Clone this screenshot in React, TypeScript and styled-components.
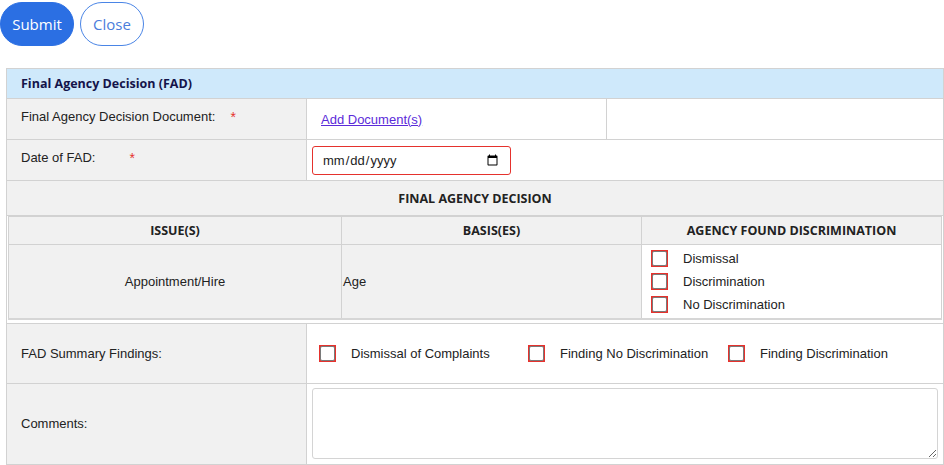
import React from "react";
import styled, { createGlobalStyle } from "styled-components";

const Global = createGlobalStyle`
  body {
    margin: 0;
    background: #fff;
    font-family: "Liberation Sans", Arial, sans-serif;
    font-size: 13px;
    color: #222;
  }
`;

const Page = styled.div`
  padding-top: 2px;
`;

const Actions = styled.div`
  display: flex;
  gap: 6px;
  height: 44px;
  margin-bottom: 22px;
`;

const PillButton = styled.button<{ $primary?: boolean }>`
  height: 44px;
  padding: 0 11px;
  border-radius: 22px;
  font-family: "Open Sans", "Noto Sans", sans-serif;
  font-size: 15px;
  cursor: pointer;
  border: 1px solid ${(p) => (p.$primary ? "#2b6fe3" : "#4a85e6")};
  background: ${(p) => (p.$primary ? "#2b6fe3" : "#fff")};
  color: ${(p) => (p.$primary ? "#fff" : "#4b7ddb")};
  min-width: ${(p) => (p.$primary ? "74px" : "64px")};
`;

const FormTable = styled.table`
  margin-left: 6px;
  width: 937px;
  border-collapse: collapse;
  table-layout: fixed;
`;

const Cell = styled.td<{ $gray?: boolean; $h?: number; $top?: boolean }>`
  border: 1px solid #d2d2d2;
  background: ${(p) => (p.$gray ? "#f1f1f1" : "#fff")};
  height: ${(p) => (p.$h ? `${p.$h}px` : "auto")};
  padding: ${(p) => (p.$top ? "9px 14px 0 14px" : "0 14px")};
  vertical-align: ${(p) => (p.$top ? "top" : "middle")};
  box-sizing: border-box;
`;

const FieldCell = styled(Cell)`
  padding: 0 5px;
`;

const OptionsCell = styled(Cell)`
  padding: 21px 0 0 0;
  vertical-align: top;
`;

const HeaderCell = styled.td`
  border: 1px solid #d2d2d2;
  background: #cfe9fb;
  height: 30px;
  box-sizing: border-box;
  padding: 0 14px;
  font-family: "Open Sans", "Noto Sans", sans-serif;
  font-weight: 700;
  font-size: 12.5px;
  color: #14144a;
`;

const SectionTitle = styled.td`
  border: 1px solid #d2d2d2;
  background: #f1f1f1;
  height: 35px;
  box-sizing: border-box;
  text-align: center;
  font-family: "Open Sans", "Noto Sans", sans-serif;
  font-weight: 700;
  font-size: 12.5px;
  color: #222;
`;

const Required = styled.span<{ $gap: number }>`
  color: #e5322d;
  margin-left: ${(p) => p.$gap}px;
  font-size: 14px;
  position: relative;
  top: 1px;
`;

const DocLink = styled.a`
  color: #5b2bd9;
  text-decoration: underline;
  font-size: 13px;
`;

const DateInput = styled.input`
  width: 199px;
  height: 29px;
  box-sizing: border-box;
  border: 1px solid #e5322d;
  border-radius: 3px;
  padding: 0 9px;
  font-family: "Liberation Sans", Arial, sans-serif;
  font-size: 13px;
  color: #222;
  display: block;
`;

const NestWrap = styled.td`
  border: 1px solid #d2d2d2;
  background: #fff;
  padding: 0 1px 3px 1px;
`;

const Inner = styled.table`
  width: 100%;
  border-collapse: collapse;
  table-layout: fixed;
  border-bottom: 2px solid #d6d6d6;
`;

const InnerHead = styled.th`
  border: 1px solid #d2d2d2;
  background: #f1f1f1;
  height: 28px;
  box-sizing: border-box;
  font-family: "Open Sans", "Noto Sans", sans-serif;
  font-weight: 700;
  font-size: 12.5px;
  color: #222;
`;

const InnerCell = styled.td<{ $gray?: boolean; $center?: boolean }>`
  border: 1px solid #d2d2d2;
  background: ${(p) => (p.$gray ? "#f1f1f1" : "#fff")};
  text-align: ${(p) => (p.$center ? "center" : "left")};
  padding: ${(p) => (p.$center ? "0" : "0 1px")};
  height: 74px;
  box-sizing: border-box;
`;

const ListCell = styled(InnerCell)`
  vertical-align: top;
  padding: 5px 0 0 9px;
`;

const CheckList = styled.div`
  display: flex;
  flex-direction: column;
  gap: 6px;
`;

const Option = styled.label<{ $w?: number }>`
  display: flex;
  align-items: center;
  gap: 15px;
  height: 17px;
  line-height: 17px;
  width: ${(p) => (p.$w ? `${p.$w}px` : "auto")};
  flex: none;
  cursor: pointer;
`;

const Box = styled.span`
  width: 17px;
  height: 17px;
  box-sizing: border-box;
  background: #e5322d;
  padding: 1px;
  display: flex;
  flex: none;
  &::after {
    content: "";
    flex: 1;
    border: 1px solid #7a7a7a;
    border-radius: 2px;
    background: #fff;
  }
`;

const OptionRow = styled.div`
  display: flex;
  align-items: center;
  padding-left: 12px;
`;

const Comments = styled.textarea`
  display: block;
  width: 626px;
  height: 71px;
  box-sizing: border-box;
  border: 1px solid #d4d4d4;
  border-radius: 3px;
  resize: vertical;
  font-family: "Liberation Sans", Arial, sans-serif;
`;

export default function App() {
  return (
    <Page>
      <Global />
      <Actions>
        <PillButton $primary>Submit</PillButton>
        <PillButton>Close</PillButton>
      </Actions>
      <FormTable>
        <colgroup>
          <col style={{ width: 300 }} />
          <col style={{ width: 300 }} />
          <col style={{ width: 337 }} />
        </colgroup>
        <tbody>
          <tr>
            <HeaderCell colSpan={3}>Final Agency Decision (FAD)</HeaderCell>
          </tr>
          <tr>
            <Cell $gray $h={41} $top>
              Final Agency Decision Document:<Required $gap={15}>*</Required>
            </Cell>
            <Cell>
              <DocLink href="#">Add Document(s)</DocLink>
            </Cell>
            <Cell />
          </tr>
          <tr>
            <Cell $gray $h={41} $top>
              Date of FAD:<Required $gap={34}>*</Required>
            </Cell>
            <FieldCell colSpan={2}>
              <DateInput type="date" />
            </FieldCell>
          </tr>
          <tr>
            <SectionTitle colSpan={3}>FINAL AGENCY DECISION</SectionTitle>
          </tr>
          <tr>
            <NestWrap colSpan={3}>
              <Inner>
                <colgroup>
                  <col style={{ width: 333 }} />
                  <col style={{ width: 300 }} />
                  <col style={{ width: 300 }} />
                </colgroup>
                <thead>
                  <tr>
                    <InnerHead>ISSUE(S)</InnerHead>
                    <InnerHead>BASIS(ES)</InnerHead>
                    <InnerHead>AGENCY FOUND DISCRIMINATION</InnerHead>
                  </tr>
                </thead>
                <tbody>
                  <tr>
                    <InnerCell $gray $center>Appointment/Hire</InnerCell>
                    <InnerCell $gray>Age</InnerCell>
                    <ListCell>
                      <CheckList>
                        {["Dismissal", "Discrimination", "No Discrimination"].map((t) => (
                          <Option key={t}>
                            <Box />
                            {t}
                          </Option>
                        ))}
                      </CheckList>
                    </ListCell>
                  </tr>
                </tbody>
              </Inner>
            </NestWrap>
          </tr>
          <tr>
            <Cell $gray $h={60}>FAD Summary Findings:</Cell>
            <OptionsCell colSpan={2}>
              <OptionRow>
                <Option $w={209}>
                  <Box />
                  Dismissal of Complaints
                </Option>
                <Option $w={200}>
                  <Box />
                  Finding No Discrimination
                </Option>
                <Option>
                  <Box />
                  Finding Discrimination
                </Option>
              </OptionRow>
            </OptionsCell>
          </tr>
          <tr>
            <Cell $gray $h={81}>Comments:</Cell>
            <FieldCell colSpan={2}>
              <Comments />
            </FieldCell>
          </tr>
        </tbody>
      </FormTable>
    </Page>
  );
}
